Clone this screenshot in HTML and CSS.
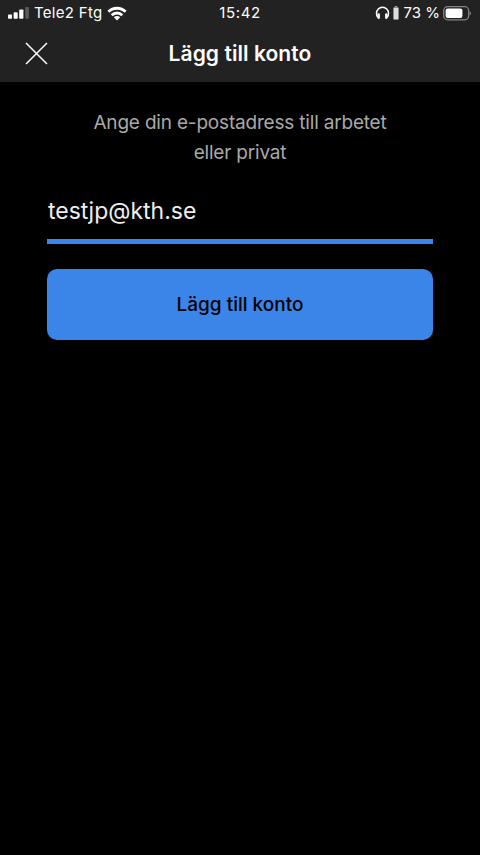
FILE: index.html
```html
<!DOCTYPE html>
<html lang="sv">
<head>
<meta charset="utf-8">
<title>Lägg till konto</title>
<link rel="stylesheet" href="styles.css">
</head>
<body>
<header class="top">
  <div class="status">
    <div class="status-left">
      <svg class="signal" width="21" height="12" viewBox="0 0 21 12" fill="#fff"><rect x="0" y="7.5" width="4" height="4.3" rx=".8"/><rect x="5.6" y="5.2" width="4.1" height="6.6" rx=".8"/><rect x="11.2" y="2.4" width="4.2" height="9.4" rx=".8"/><rect x="17.2" y="0" width="3.7" height="11.8" rx=".8" fill="#5a5a5a"/></svg>
      <span class="carrier">Tele2 Ftg</span>
      <svg class="wifi" width="20" height="15" viewBox="0 0 20 15" fill="none" stroke="#fff" stroke-width="2.8"><path d="M1.4 5.8a12.2 12.2 0 0 1 17.2 0"/><path d="M4.7 9.2a7.5 7.5 0 0 1 10.6 0"/><path d="M10 14.5 6.8 11.3a4.6 4.6 0 0 1 6.4 0z" fill="#fff" stroke="none"/></svg>
    </div>
    <span class="time">15:42</span>
    <div class="status-right">
      <svg width="15" height="14" viewBox="0 0 15 14" fill="none" stroke="#fff" stroke-width="1.5"><path d="M2.8 11.4C1.8 10.2 1.5 8.8 1.5 7.2a6 6 0 0 1 12 0c0 1.6-.3 3-1.3 4.2"/><path d="M3.7 8.4v3.4M11.3 8.4v3.4" stroke-width="2.4" stroke-linecap="round"/></svg>
      <svg class="cell" width="6" height="14" viewBox="0 0 6 14"><rect x="1.7" y="0" width="2.6" height="2" fill="#999"/><rect x=".5" y="1.5" width="5" height="12" rx="1" fill="#ddd" stroke="#888"/></svg>
      <span class="percent">73 %</span>
      <svg class="battery" width="28" height="15" viewBox="0 0 28 15"><rect x=".7" y=".7" width="25" height="13.1" rx="4" fill="none" stroke="#858585" stroke-width="1.3"/><rect x="2.6" y="2.5" width="16.8" height="9.6" rx="2" fill="#fff"/><path d="M26.8 5.2q1.2.5 1.2 2.1t-1.2 2.1z" fill="#858585"/></svg>
    </div>
  </div>
  <div class="nav">
    <svg class="close" width="24" height="24" viewBox="0 0 24 24" fill="none" stroke="#fff" stroke-width="1.5"><path d="m2 1 21 21m0-21-21 21"/></svg>
    <h1 class="title">Lägg till konto</h1>
  </div>
</header>
<main class="form">
  <p class="prompt">Ange din e-postadress till arbetet<br>eller privat</p>
  <div class="field"><span class="email">testjp@kth.se</span></div>
  <button class="submit" type="button">Lägg till konto</button>
</main>
</body>
</html>
```
FILE: styles.css
```css
* { box-sizing: border-box; }
body {
  margin: 0;
  min-height: 855px;
  background: #000;
  color: #fff;
  font-family: Inter, "Liberation Sans", sans-serif;
}
svg { display: block; flex: none; }
.top { height: 82px; background: #222; }
.status {
  height: 26px;
  padding: 0 8px;
  display: grid;
  grid-template-columns: 1fr auto 1fr;
  align-items: center;
  font-size: 15px;
  line-height: 26px;
  white-space: nowrap;
}
.status-left, .status-right { display: flex; align-items: center; }
.status-right { justify-content: flex-end; padding-right: 1px; }
.carrier { margin-left: 5px; letter-spacing: .3px; }
.wifi { margin-left: 4px; }
.time { letter-spacing: .6px; }
.cell { margin: 0 5px 0 3px; }
.battery { margin-left: 3px; }
.nav {
  height: 56px;
  padding: 0 24px;
  display: grid;
  grid-template-columns: 24px 1fr 24px;
  align-items: center;
}
.title {
  margin: 0;
  font-size: 21px;
  font-weight: 600;
  line-height: 28px;
  letter-spacing: .07px;
  text-align: center;
}
.form { padding: 26px 47px 0; }
.prompt {
  margin: 0;
  color: #a9a9a9;
  font-size: 19px;
  line-height: 30px;
  letter-spacing: -.19px;
  text-align: center;
}
.field {
  height: 76px;
  padding: 28px 0 0 1px;
  border-bottom: 5px solid #3b85e9;
  color: #eee;
  font-size: 23px;
  line-height: 30px;
}
.submit {
  display: block;
  width: 386px;
  height: 71px;
  margin: 25px 0 0;
  padding: 0;
  border: 0;
  border-radius: 10px;
  background: #3b85e9;
  color: #000;
  font: 500 19px/71px Inter, "Liberation Sans", sans-serif;
}
```
